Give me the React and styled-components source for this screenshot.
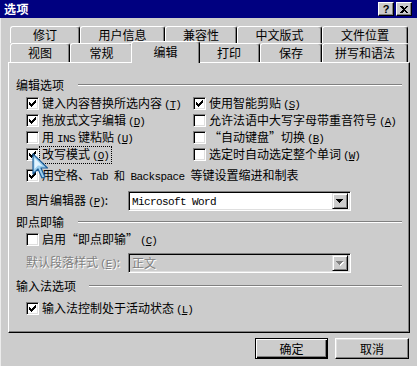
import React from 'react';
import styled, { createGlobalStyle, css } from 'styled-components';

const FACE = '#cccccc';
const CJK = `"Noto Sans CJK SC", "Noto Sans", sans-serif`;
const MONO = `"Liberation Mono", "Noto Sans CJK SC", monospace`;

const Global = createGlobalStyle`
  html, body { margin: 0; padding: 0; background: ${FACE}; }
  body { font-family: ${CJK}; font-size: 12px; color: #000; }
`;

const Window = styled.div`
  position: relative;
  width: 417px;
  height: 366px;
  box-sizing: border-box;
  background: ${FACE};
  box-shadow: inset 1px 0 #ececec;
  display: flex;
  flex-direction: column;
  overflow: hidden;
`;

const TitleBar = styled.div`
  height: 18px;
  background: #000080;
  display: flex;
  align-items: center;
  padding: 0 5px 0 4px;
`;

const Title = styled.span`
  color: #fff;
  font-weight: 700;
  font-size: 12px;
  line-height: 1;
  letter-spacing: 0.5px;
`;

const CaptionButtons = styled.div`
  margin-left: auto;
  display: flex;
  gap: 2px;
`;

const CaptionButton = styled.div`
  width: 16px;
  height: 14px;
  box-sizing: border-box;
  background: ${FACE};
  border: 1px solid;
  border-color: #fff #000 #000 #fff;
  box-shadow: inset -1px -1px #808080;
  display: flex;
  align-items: center;
  justify-content: center;
  font-family: "Liberation Sans", sans-serif;
  font-weight: 700;
  font-size: 11px;
  line-height: 1;
`;

const Body = styled.div`
  padding: 8px 7px 0 8px;
  display: flex;
  flex-direction: column;
`;

const TabRow = styled.div`
  display: flex;
  margin-left: 2px;
  height: ${p => p.$h}px;
  align-items: flex-end;
`;

const Tab = styled.div`
  position: relative;
  width: ${p => p.$w}px;
  height: ${p => p.$h}px;
  box-sizing: border-box;
  background: ${FACE};
  border-top: 1px solid #fff;
  border-left: 1px solid #fff;
  border-right: 1px solid #000;
  box-shadow: inset -1px 0 #808080;
  border-radius: 3px 3px 0 0;
  display: flex;
  align-items: center;
  justify-content: center;
  font-size: 12px;
  line-height: 1;
  white-space: nowrap;
  ${p => p.$active && css`
    width: ${p.$w + 4}px;
    margin: 0 -2px -1px -2px;
    z-index: 2;
    padding-bottom: 1px;
  `}
`;

const Panel = styled.div`
  height: 271px;
  box-sizing: border-box;
  border-top: 1px solid #fff;
  border-left: 1px solid #fff;
  border-right: 1px solid #000;
  border-bottom: 1px solid #000;
  box-shadow: inset -1px -1px #808080;
  padding: 14px 7px 0 7px;
  display: flex;
  flex-direction: column;
`;

const GroupHeader = styled.div`
  display: flex;
  align-items: center;
  height: 16px;
  margin-top: ${p => p.$mt || 0}px;
`;

const GroupLabel = styled.span`
  white-space: nowrap;
  line-height: 1;
`;

const Etched = styled.div`
  flex: 1;
  margin-left: ${p => p.$ml}px;
  height: 0;
  border-top: 1px solid #808080;
  border-bottom: 1px solid #fff;
`;

const CheckGrid = styled.div`
  display: grid;
  grid-template-columns: 167px 1fr;
  grid-auto-rows: 17px;
  margin: 2px 0 0 10px;
`;

const CheckRow = styled.div`
  display: flex;
  align-items: center;
  gap: 3px;
  height: 17px;
  margin-left: ${p => p.$ml || 0}px;
  margin-top: ${p => p.$mt || 0}px;
`;

const Box = styled.span`
  flex: none;
  width: 13px;
  height: 13px;
  box-sizing: border-box;
  background: #fff;
  border: 1px solid;
  border-color: #808080 #fff #fff #808080;
  box-shadow: inset 1px 1px #000, inset -1px -1px #dfdfdf;
  display: flex;
  align-items: center;
  justify-content: center;
`;

const Label = styled.span`
  white-space: nowrap;
  line-height: 1;
  padding: 1px 2px;
  margin-left: -2px;
  ${p => p.$focus && css`outline: 1px dotted #000; outline-offset: 0;`}
  ${p => p.$disabled && css`color: #808080; text-shadow: 1px 1px #fff;`}
`;

const Latin = styled.span`
  font-family: ${MONO};
  font-size: 11px;
  letter-spacing: -0.6px;
  margin: 0 ${p => p.$m ?? 0}px;
`;

const Mn = styled.span`
  font-family: ${MONO};
  font-size: 11px;
  letter-spacing: -1px;
  margin-left: 2px;
`;

const FieldRow = styled.div`
  display: flex;
  align-items: center;
  height: 20px;
  margin: ${p => p.$mt || 0}px 0 0 10px;
`;

const FieldLabel = styled(Label)`
  width: 102px;
  margin-left: 0;
  padding: 0;
`;

const Select = styled.div`
  width: 223px;
  height: 20px;
  box-sizing: border-box;
  background: ${p => (p.$disabled ? FACE : '#fff')};
  border: 1px solid;
  border-color: #808080 #fff #fff #808080;
  box-shadow: inset 1px 1px #000, inset -1px -1px #dfdfdf;
  display: flex;
  align-items: center;
  padding: 0 2px 0 3px;
`;

const SelectText = styled.span`
  flex: 1;
  line-height: 1;
  white-space: nowrap;
  ${p => p.$disabled && css`color: #808080; text-shadow: 1px 1px #fff;`}
`;

const DropButton = styled.div`
  width: 16px;
  height: 16px;
  box-sizing: border-box;
  background: ${FACE};
  border: 1px solid;
  border-color: #dfdfdf #000 #000 #dfdfdf;
  box-shadow: inset 1px 1px #fff, inset -1px -1px #808080;
  display: flex;
  align-items: center;
  justify-content: center;
`;

const ButtonRow = styled.div`
  display: flex;
  justify-content: flex-end;
  gap: 7px;
  margin-top: 5px;
  padding-right: 1px;
`;

const Button = styled.button`
  width: ${p => p.$w}px;
  height: 21px;
  box-sizing: border-box;
  background: ${FACE};
  font-family: ${CJK};
  font-size: 12px;
  color: #000;
  padding: 0;
  line-height: 1;
  border: 1px solid;
  border-color: #fff #000 #000 #fff;
  box-shadow: inset -1px -1px #808080, inset 1px 1px #dfdfdf;
  ${p => p.$default && css`
    border-color: #000;
    box-shadow: inset 1px 1px #fff, inset -1px -1px #000, inset -2px -2px #808080;
  `}
`;

const Cursor = styled.svg`
  position: absolute;
  left: 32px;
  top: 153px;
  pointer-events: none;
`;

const CheckMark = () => (
  <svg width="7" height="7" viewBox="0 0 7 7" shapeRendering="crispEdges">
    <rect x="0" y="2" width="1" height="3" fill="#000" />
    <rect x="1" y="3" width="1" height="3" fill="#000" />
    <rect x="2" y="4" width="1" height="3" fill="#000" />
    <rect x="3" y="3" width="1" height="3" fill="#000" />
    <rect x="4" y="2" width="1" height="3" fill="#000" />
    <rect x="5" y="1" width="1" height="3" fill="#000" />
    <rect x="6" y="0" width="1" height="3" fill="#000" />
  </svg>
);

const Arrow = ({ disabled }) => (
  <svg width="8" height="5" viewBox="0 0 8 5" shapeRendering="crispEdges">
    {disabled && <polygon points="1,1 8,1 4.5,5" fill="#fff" />}
    <polygon points="0,0 7,0 3.5,4" fill={disabled ? '#808080' : '#000'} />
  </svg>
);

const Check = ({ checked, children, focus, ...rest }) => (
  <CheckRow {...rest}>
    <Box>{checked && <CheckMark />}</Box>
    <Label $focus={focus}>{children}</Label>
  </CheckRow>
);

const M = ({ k }) => (
  <Mn>
    (<u>{k}</u>)
  </Mn>
);

const backTabs = [
  ['修订', 70],
  ['用户信息', 85],
  ['兼容性', 72],
  ['中文版式', 85],
  ['文件位置', 86],
];

const frontTabs = [
  ['视图', 60],
  ['常规', 63],
  ['编辑', 65, true],
  ['打印', 62],
  ['保存', 62],
  ['拼写和语法', 86],
];

export default function App() {
  return (
    <>
      <Global />
      <Window>
        <TitleBar>
          <Title>选项</Title>
          <CaptionButtons>
            <CaptionButton>?</CaptionButton>
            <CaptionButton>
              <svg width="8" height="7" viewBox="0 0 8 7" shapeRendering="crispEdges">
                <path d="M0 0h2l2 2 2-2h2L5 3.5 8 7H6L4 5 2 7H0l3-3.5z" fill="#000" />
              </svg>
            </CaptionButton>
          </CaptionButtons>
        </TitleBar>
        <Body>
          <TabRow $h={17}>
            {backTabs.map(([t, w]) => (
              <Tab key={t} $w={w} $h={17}>{t}</Tab>
            ))}
          </TabRow>
          <TabRow $h={19}>
            {frontTabs.map(([t, w, a]) => (
              <Tab key={t} $w={w} $h={a ? 22 : 19} $active={a}>{t}</Tab>
            ))}
          </TabRow>
          <Panel>
            <GroupHeader>
              <GroupLabel>编辑选项</GroupLabel>
              <Etched $ml={14} />
            </GroupHeader>
            <CheckGrid>
              <Check checked>键入内容替换所选内容<M k="T" /></Check>
              <Check checked>使用智能剪贴<M k="S" /></Check>
              <Check checked>拖放式文字编辑<M k="D" /></Check>
              <Check>允许法语中大写字母带重音符号<M k="A" /></Check>
              <Check>用<Latin $m={3}>INS</Latin>键粘贴<M k="U" /></Check>
              <Check>“自动键盘”切换<M k="B" /></Check>
              <Check checked focus>改写模式<M k="O" /></Check>
              <Check>选定时自动选定整个单词<M k="W" /></Check>
            </CheckGrid>
            <Check checked $ml={10} $mt={4}>
              用空格、<Latin>Tab 和 Backspace </Latin>等键设置缩进和制表
            </Check>
            <FieldRow $mt={7}>
              <FieldLabel>图片编辑器<M k="P" />:</FieldLabel>
              <Select>
                <SelectText><Latin>Microsoft Word</Latin></SelectText>
                <DropButton><Arrow /></DropButton>
              </Select>
            </FieldRow>
            <GroupHeader $mt={3}>
              <GroupLabel>即点即输</GroupLabel>
              <Etched $ml={14} />
            </GroupHeader>
            <Check $ml={10} $mt={1}>启用“即点即输”<M k="C" /></Check>
            <FieldRow $mt={5}>
              <FieldLabel $disabled>默认段落样式<M k="E" />:</FieldLabel>
              <Select $disabled>
                <SelectText $disabled>正文</SelectText>
                <DropButton><Arrow disabled /></DropButton>
              </Select>
            </FieldRow>
            <GroupHeader $mt={5}>
              <GroupLabel>输入法选项</GroupLabel>
              <Etched $ml={13} />
            </GroupHeader>
            <Check checked $ml={10} $mt={6}>输入法控制处于活动状态<M k="L" /></Check>
          </Panel>
          <ButtonRow>
            <Button $w={73} $default>确定</Button>
            <Button $w={74}>取消</Button>
          </ButtonRow>
        </Body>
        <Cursor width="18" height="28" viewBox="0 0 18 28">
          <polygon
            points="1,1 1,21 6,16 10,25 13,24 9,15 15.5,15"
            fill="#9ccfee"
            stroke="#1f5f9a"
            strokeWidth="1.2"
            strokeLinejoin="round"
          />
          <polygon points="2.5,5 2.5,16 6,12.5 10.5,13" fill="#e2f4ff" />
        </Cursor>
      </Window>
    </>
  );
}
